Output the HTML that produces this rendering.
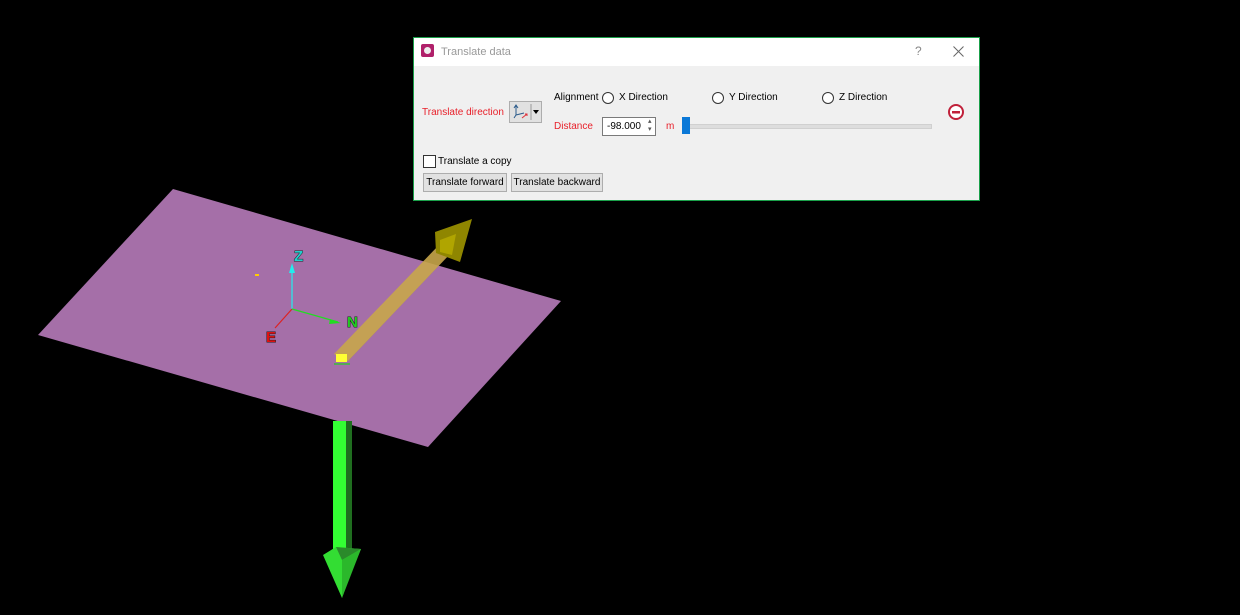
<!DOCTYPE html>
<html><head><meta charset="utf-8"><style>
body{margin:0;width:1240px;height:615px;background:#000;position:relative;overflow:hidden;font-family:"Liberation Sans",sans-serif;font-size:10px;}
.a{position:absolute;}
#dlg{left:413px;top:37px;width:565px;height:162px;border:1px solid #1aa04a;background:#f0f0f0;}
#tb{left:0;top:0;width:565px;height:28px;background:#fff;}
.rad{width:10px;height:10px;border:1px solid #333;border-radius:50%;background:#fff;}
.btn{border:1px solid #adadad;background:#e1e1e1;height:17px;line-height:17px;text-align:center;color:#000;}
.red{color:#e8202a;}
</style></head><body>
<svg class="a" style="left:0;top:0" width="1240" height="615">
<polygon points="173,189 561,301 428,447 38,335" fill="#a56fa8"/>
<rect x="333" y="421" width="13" height="136" fill="#33ff33"/>
<rect x="346" y="421" width="6" height="136" fill="#1f6e1f"/>
<polygon points="323,555 336,547 361,549 350,575 342,598" fill="#33dd33"/>
<polygon points="336,547 361,549 342,560" fill="#2a8a2a"/>
<polygon points="342,560 361,549 342,598" fill="#2bb82b"/>
<polygon points="334,354 348,361 450,254 438,246" fill="#c8a64a" opacity="0.9"/>
<polygon points="348,361 352,357 452,252 450,254" fill="#9a8060"/>
<polygon points="435,232 472,219 460,262 436,253" fill="#8f8600"/>
<polygon points="440,240 456,234 452,255 440,252" fill="#b0a500"/>
<rect x="336" y="354" width="11" height="8" fill="#ffff33"/>
<line x1="334" y1="364" x2="350" y2="364" stroke="#5a5" stroke-width="2"/>
<rect x="255" y="274" width="4" height="2" fill="#ffcc00"/>
<line x1="292" y1="309" x2="292" y2="270" stroke="#22eeee" stroke-width="1.2"/>
<polygon points="289,273 292,263 295,273" fill="#22eeee"/>
<line x1="292" y1="309" x2="338" y2="322" stroke="#22dd22" stroke-width="1.2"/>
<polygon points="330,319 341,323 329,324" fill="#22dd22"/>
<line x1="292" y1="309" x2="275" y2="328" stroke="#dd2222" stroke-width="1.2"/>
<g font-family="Liberation Sans" font-weight="bold" font-size="15" stroke="#222" stroke-width="1" paint-order="stroke">
<text x="294" y="261" fill="#22cccc">Z</text>
<text x="347" y="327" fill="#22cc22">N</text>
<text x="266" y="342" fill="#dd1111">E</text>
</g>
</svg>
<div id="dlg" class="a">
 <div id="tb" class="a">
  <div class="a" style="left:7px;top:6px;width:13px;height:13px;background:#b0206a;border-radius:2px"><div class="a" style="left:3px;top:3px;width:7px;height:7px;border-radius:50%;background:#eee"></div></div>
  <div class="a" style="left:27px;top:8px;font-size:11px;color:#999">Translate data</div>
  <div class="a" style="left:501px;top:6px;font-size:12px;color:#888">?</div>
  <svg class="a" style="left:539px;top:8px" width="11" height="11"><path d="M0.5 0.5L10.5 10.5M10.5 0.5L0.5 10.5" stroke="#666" stroke-width="1"/></svg>
 </div>
 <div class="a red" style="left:8px;top:69px">Translate direction</div>
 <div class="a" style="left:95px;top:63px;width:31px;height:20px;border:1px solid #adadad;background:#e1e1e1"></div>
 <svg class="a" style="left:98px;top:65px" width="30" height="18"><path d="M4 12V3M2 5l2-3 2 3M4 12l8-2M4 12l-2 3" stroke="#2a5a8a" fill="none"/><path d="M10 15l5-4M13 11h2v2" stroke="#e0303a" fill="none"/><line x1="19" y1="1" x2="19" y2="17" stroke="#999"/><polygon points="21,7 27,7 24,11" fill="#000"/></svg>
 <div class="a" style="left:140px;top:54px">Alignment</div>
 <div class="a rad" style="left:188px;top:54px"></div><div class="a" style="left:205px;top:54px">X Direction</div>
 <div class="a rad" style="left:298px;top:54px"></div><div class="a" style="left:315px;top:54px">Y Direction</div>
 <div class="a rad" style="left:408px;top:54px"></div><div class="a" style="left:425px;top:54px">Z Direction</div>
 <div class="a red" style="left:140px;top:83px">Distance</div>
 <div class="a" style="left:188px;top:79px;width:52px;height:17px;border:1px solid #7a7a7a;background:#fff"><span class="a" style="left:4px;top:3px">-98.000</span><span class="a" style="left:45px;top:0px;font-size:7px;color:#555;line-height:8px">▴<br>▾</span></div>
 <div class="a red" style="left:252px;top:83px">m</div>
 <div class="a" style="left:268px;top:86px;width:248px;height:3px;background:#ddd;border:1px solid #d0d0d0"></div>
 <div class="a" style="left:268px;top:79px;width:8px;height:17px;background:#0a78d7"></div>
 <svg class="a" style="left:533px;top:65px" width="18" height="18"><circle cx="9" cy="9" r="7" fill="#fff" stroke="#c0203a" stroke-width="2"/><rect x="5" y="8" width="8" height="2.5" fill="#c0203a"/></svg>
 <div class="a" style="left:9px;top:117px;width:11px;height:11px;border:1px solid #333;background:#fff"></div>
 <div class="a" style="left:24px;top:118px">Translate a copy</div>
 <div class="a btn" style="left:9px;top:135px;width:82px">Translate forward</div>
 <div class="a btn" style="left:97px;top:135px;width:90px">Translate backward</div>
</div>
</body></html>
